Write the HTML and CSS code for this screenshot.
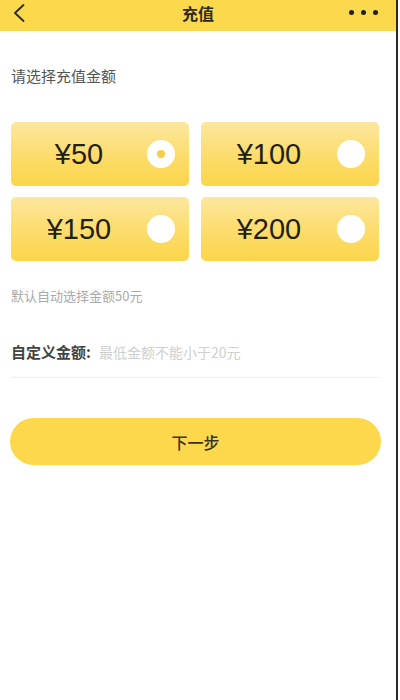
FILE: index.html
```html
<!DOCTYPE html>
<html lang="zh-CN">
<head>
<meta charset="utf-8">
<title>充值</title>
<link rel="stylesheet" href="styles.css">
</head>
<body>
<div class="app">
  <header class="topbar">
    <div class="back">
      <svg width="12" height="18" viewBox="0 0 12 18"><path d="M10.5 1 L2 9 L10.5 17" fill="none" stroke="#2b2b2b" stroke-width="1.8" stroke-linecap="round" stroke-linejoin="round"/></svg>
    </div>
    <div class="title">充值</div>
    <div class="more"><span></span><span></span><span></span></div>
  </header>

  <div class="label">请选择充值金额</div>

  <div class="grid">
    <div class="card">
      <div class="amount">¥50</div>
      <div class="radio selected"></div>
    </div>
    <div class="card">
      <div class="amount">¥100</div>
      <div class="radio"></div>
    </div>
    <div class="card">
      <div class="amount">¥150</div>
      <div class="radio"></div>
    </div>
    <div class="card">
      <div class="amount">¥200</div>
      <div class="radio"></div>
    </div>
  </div>

  <div class="hint">默认自动选择金额50元</div>

  <div class="custom">
    <span class="custom-label">自定义金额:</span>
    <span class="placeholder">最低金额不能小于20元</span>
  </div>

  <div class="btn">下一步</div>
</div>
</body>
</html>
```

FILE: styles.css
```css
html, body {
  margin: 0;
  padding: 0;
  background: #ffffff;
}
body {
  font-family: "Noto Sans CJK SC", "Noto Sans", sans-serif;
  color: #333;
}
.app {
  width: 396px;
  min-height: 700px;
  border-right: 2px solid #2a2a2a;
  background: #fff;
}
.topbar {
  height: 26px;
  padding-bottom: 5px;
  background: #fcd84c;
  display: grid;
  grid-template-columns: 1fr auto 1fr;
  align-items: center;
}
.back {
  padding-left: 13px;
  display: flex;
  align-items: center;
  height: 18px;
}
.title {
  font-size: 16px;
  font-weight: 700;
  color: #2f2a1c;
  line-height: 20px;
}
.more {
  display: flex;
  justify-content: flex-end;
  gap: 7px;
  padding-right: 18px;
  margin-top: -2px;
}
.more span {
  width: 5px;
  height: 5px;
  border-radius: 50%;
  background: #1e1e1e;
}
.label {
  margin: 35px 0 0 11px;
  font-size: 15px;
  line-height: 20px;
  color: #555;
}
.grid {
  margin: 36px 0 0 11px;
  display: grid;
  grid-template-columns: 178px 178px;
  grid-auto-rows: 64px;
  column-gap: 12px;
  row-gap: 11px;
}
.card {
  border-radius: 5px;
  background: linear-gradient(to bottom, #fde79f 0%, #fcdc6a 55%, #fbd54a 100%);
  display: flex;
  align-items: center;
}
.amount {
  flex: 1;
  text-align: center;
  font-family: "Liberation Sans", Arial, sans-serif;
  font-size: 29px;
  color: #231f14;
}
.radio {
  width: 28px;
  height: 28px;
  border-radius: 50%;
  background: #fff;
  margin-right: 14px;
  display: flex;
  align-items: center;
  justify-content: center;
}
.radio.selected::after {
  content: "";
  width: 8px;
  height: 8px;
  border-radius: 50%;
  background: #f5cf47;
}
.hint {
  margin: 26px 0 0 11px;
  font-size: 13px;
  line-height: 18px;
  color: #aaa;
}
.custom {
  margin: 37px 16px 0 11px;
  padding-bottom: 15px;
  border-bottom: 1px solid #f0f0f0;
  display: flex;
  align-items: center;
  line-height: 20px;
}
.custom-label {
  font-size: 15px;
  font-weight: 600;
  color: #444;
  margin-right: 8px;
}
.placeholder {
  font-size: 14px;
  color: #cfcfcf;
}
.btn {
  margin: 40px 15px 0 10px;
  height: 47px;
  border-radius: 24px;
  background: #fdd84d;
  display: flex;
  align-items: center;
  justify-content: center;
  font-size: 16px;
  font-weight: 500;
  color: #3a3320;
}
```
